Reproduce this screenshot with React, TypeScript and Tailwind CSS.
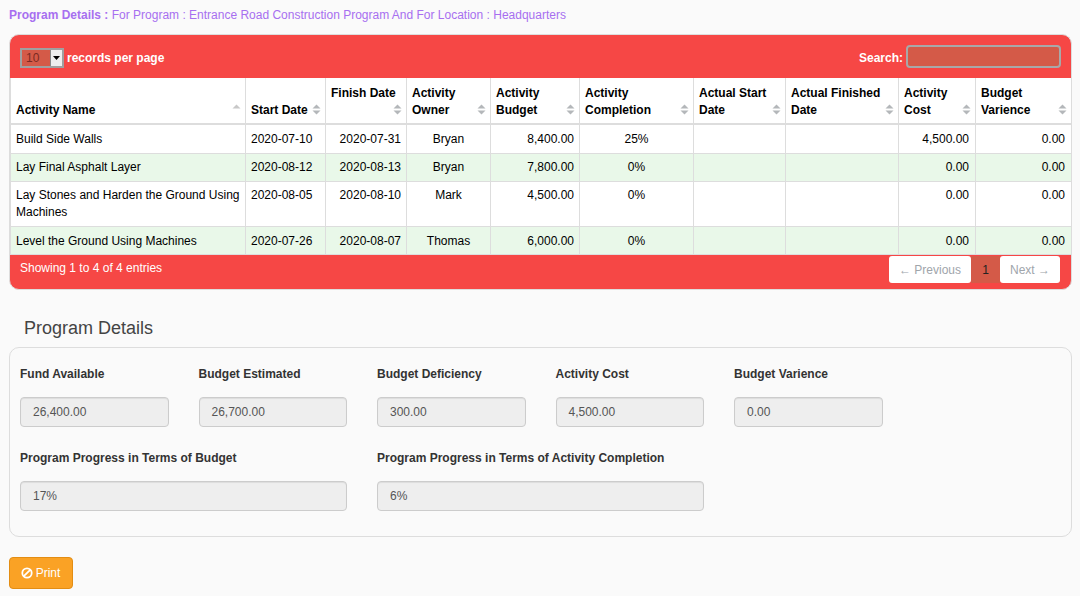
import React from 'react';

const font = { fontFamily: '"Liberation Sans", Arial, sans-serif' };

const columns = [
  { title: ['Activity Name'], width: 'w-[235px]' },
  { title: ['Start Date'], width: 'w-[80px]' },
  { title: ['Finish Date'], width: 'w-[81px]' },
  { title: ['Activity', 'Owner'], width: 'w-[84px]' },
  { title: ['Activity', 'Budget'], width: 'w-[89px]' },
  { title: ['Activity', 'Completion'], width: 'w-[114px]' },
  { title: ['Actual Start', 'Date'], width: 'w-[92px]' },
  { title: ['Actual Finished', 'Date'], width: 'w-[113px]' },
  { title: ['Activity', 'Cost'], width: 'w-[77px]' },
  { title: ['Budget', 'Varience'], width: 'w-[96px]' },
];

const rows = [
  { name: 'Build Side Walls', start: '2020-07-10', finish: '2020-07-31', owner: 'Bryan', budget: '8,400.00', pct: '25%', cost: '4,500.00', variance: '0.00', pad: 'pt-[6px] pb-[5px]', green: false },
  { name: 'Lay Final Asphalt Layer', start: '2020-08-12', finish: '2020-08-13', owner: 'Bryan', budget: '7,800.00', pct: '0%', cost: '0.00', variance: '0.00', pad: 'pt-[5px] pb-[5px]', green: true },
  { name: 'Lay Stones and Harden the Ground Using Machines', start: '2020-08-05', finish: '2020-08-10', owner: 'Mark', budget: '4,500.00', pct: '0%', cost: '0.00', variance: '0.00', pad: 'pt-[5px] pb-[5px]', green: false },
  { name: 'Level the Ground Using Machines', start: '2020-07-26', finish: '2020-08-07', owner: 'Thomas', budget: '6,000.00', pct: '0%', cost: '0.00', variance: '0.00', pad: 'pt-[6px] pb-[4px]', green: true },
];

const SortIcon = ({ upOnly }: { upOnly?: boolean }) => (
  <svg width="9" height="11" viewBox="0 0 9 11" className="absolute right-[4px] bottom-[8px]">
    <path d="M4.5 0.5 L8.5 4.5 H0.5 Z" fill={upOnly ? '#c8c8c8' : '#b4b7ba'} />
    {!upOnly && <path d="M4.5 10.5 L8.5 6.5 H0.5 Z" fill="#b4b7ba" />}
  </svg>
);

const Field = ({ label, value, wide }: { label: string; value: string; wide?: boolean }) => (
  <div className={wide ? 'col-span-2' : ''}>
    <div className="text-[12px] leading-[17px] font-bold text-[#333] h-[17px]">{label}</div>
    <div className="mt-[14px] h-[30px] rounded-[4px] border border-[#ccc] bg-[#eee] px-3 text-[12px] leading-[28px] text-[#555] shadow-[inset_0_1px_1px_rgba(0,0,0,0.075)]">
      {value}
    </div>
  </div>
);

export default function App() {
  const cell = 'border-r border-b border-[#ddd] px-[5px] align-top text-[12px] leading-[17px] text-black';

  return (
    <div className="min-h-[596px] bg-[#fafafa] pl-[9px] pr-[8px] pt-[7px]" style={font}>
      <div className="h-[17px] text-[12px] leading-[17px] text-[#a76ff0]">
        <b>Program Details :</b> For Program : Entrance Road Construction Program And For Location : Headquarters
      </div>

      {/* Table card */}
      <div className="mt-[10px] overflow-hidden rounded-[10px] border border-[#ddd] bg-[#f64745]">
        <div className="flex h-[43px] items-center justify-between pl-[10px] pr-[10px] pt-[2px]">
          <div className="flex items-center gap-[2px] text-[12px] font-bold text-white">
            <div className="flex h-[20px] w-[44px] items-stretch border-2 border-[#a0a0a0] bg-[#d45a48]">
              <span className="flex-1 pl-[4px] text-[12px] font-normal leading-[16px] text-[#7a2a22]">10</span>
              <span className="flex w-[12px] items-center justify-center border-l border-[#888] bg-[#eee]">
                <svg width="7" height="4" viewBox="0 0 7 4"><path d="M0 0H7L3.5 4Z" fill="#000" /></svg>
              </span>
            </div>
            <span className="ml-[1px]">records per page</span>
          </div>
          <div className="flex items-center gap-[3px] text-[12px] font-bold text-white">
            <span>Search:</span>
            <div className="mb-[3px] h-[23px] w-[155px] rounded-[4px] border-2 border-[#a8a8a8] bg-[#d45a48]" />
          </div>
        </div>

        <table className="w-full table-fixed border-collapse border-l border-[#ddd] bg-white">
          <colgroup>
            {columns.map((c) => (
              <col key={c.title.join()} className={c.width} />
            ))}
          </colgroup>
          <thead>
            <tr className="h-[46px]">
              {columns.map((c, i) => (
                <th
                  key={c.title.join()}
                  className={`relative border-r border-b-2 border-[#ddd] pl-[5px] pr-[5px] text-left font-bold text-[12px] leading-[17px] text-black ${i === 2 ? 'pt-[7px] align-top' : 'pb-[4px] align-bottom'}`}
                >
                  {c.title.map((t) => (
                    <div key={t} className="whitespace-nowrap">{t}</div>
                  ))}
                  <SortIcon upOnly={i === 0} />
                </th>
              ))}
            </tr>
          </thead>
          <tbody>
            {rows.map((r) => (
              <tr key={r.name} className={r.green ? 'bg-[#e9f8e9]' : 'bg-white'}>
                <td className={`${cell} ${r.pad}`}>{r.name}</td>
                <td className={`${cell} ${r.pad}`}>{r.start}</td>
                <td className={`${cell} ${r.pad} text-right`}>{r.finish}</td>
                <td className={`${cell} ${r.pad} text-center`}>{r.owner}</td>
                <td className={`${cell} ${r.pad} text-right`}>{r.budget}</td>
                <td className={`${cell} ${r.pad} text-center`}>{r.pct}</td>
                <td className={`${cell} ${r.pad}`}></td>
                <td className={`${cell} ${r.pad}`}></td>
                <td className={`${cell} ${r.pad} pr-[6px] text-right`}>{r.cost}</td>
                <td className={`${cell} ${r.pad} pr-[6px] text-right`}>{r.variance}</td>
              </tr>
            ))}
          </tbody>
        </table>

        <div className="flex h-[34px] items-start justify-between pl-[10px] pr-[11px] text-[12px]">
          <div className="pt-[5px] leading-[17px] text-white">Showing 1 to 4 of 4 entries</div>
          <div className="flex items-center pt-[1px] leading-[17px]">
            <div className="flex h-[27px] w-[82px] items-center justify-center rounded-[3px] bg-white pt-[1px] text-[#a0a5ab]">← Previous</div>
            <div className="flex h-[27px] w-[29px] items-center justify-center bg-[#d45a48] pt-[1px] text-[#222]">1</div>
            <div className="flex h-[27px] w-[60px] items-center justify-center rounded-[3px] bg-white pt-[1px] text-[#a0a5ab]">Next →</div>
          </div>
        </div>
      </div>

      <h2 className="mt-[27px] pl-[15px] text-[18px] leading-[22px] font-normal text-[#444]">Program Details</h2>

      {/* Summary panel */}
      <div className="mt-[8px] h-[190px] rounded-[10px] border border-[#ddd] bg-[#fafafa] pl-[10px] pt-[18px]">
        <div className="grid grid-cols-[repeat(6,148.5px)] gap-x-[30px] gap-y-[23px]">
          <Field label="Fund Available" value="26,400.00" />
          <Field label="Budget Estimated" value="26,700.00" />
          <Field label="Budget Deficiency" value="300.00" />
          <Field label="Activity Cost" value="4,500.00" />
          <Field label="Budget Varience" value="0.00" />
          <div />
          <Field wide label="Program Progress in Terms of Budget" value="17%" />
          <Field wide label="Program Progress in Terms of Activity Completion" value="6%" />
        </div>
      </div>

      <button className="mt-[20px] flex h-[32px] w-[64px] items-center justify-center gap-[3px] rounded-[4px] border border-[#e38d13] bg-[#faa225] pr-[1px] text-[12px] text-white">
        <svg width="12" height="12" viewBox="0 0 12 12" fill="none" stroke="#fff" strokeWidth="1.8">
          <circle cx="6" cy="6" r="4.7" />
          <path d="M2.8 9.2 L9.2 2.8" />
        </svg>
        Print
      </button>
    </div>
  );
}
